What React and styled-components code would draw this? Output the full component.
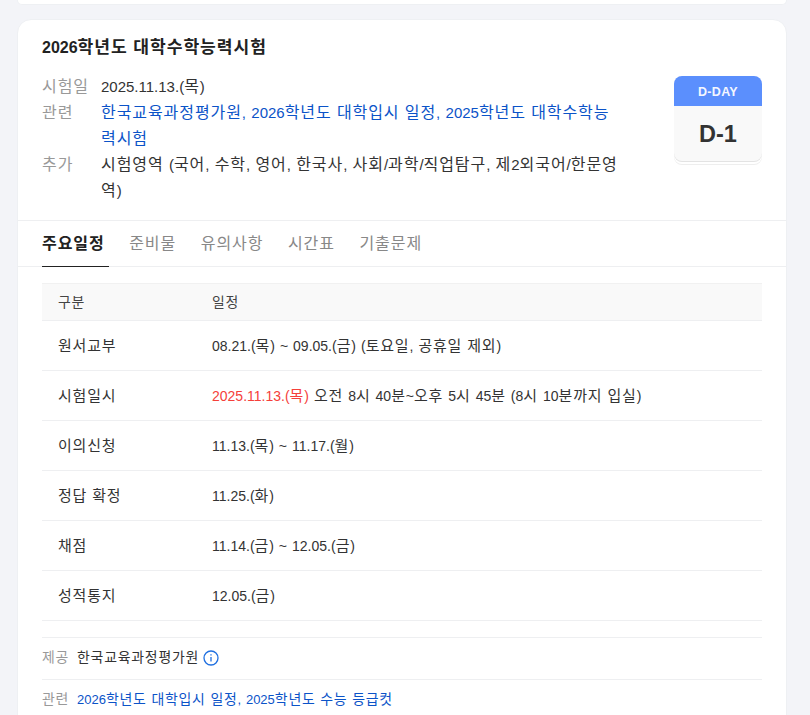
import React from "react";
import styled, { createGlobalStyle } from "styled-components";

const Global = createGlobalStyle`
  html, body { margin: 0; padding: 0; height: 715px; overflow: hidden; background: #f3f4f8; }
  body { font-family: "Liberation Sans", "Noto Sans CJK KR", sans-serif; color: #333; word-spacing: 0.07em; }
  * { box-sizing: border-box; }
`;
const Page = styled.div`
  display: flex; flex-direction: column; gap: 14px; padding: 0 23px 0 17px; height: 715px; overflow: hidden;
`;
const PrevCard = styled.div`
  height: 5px; flex: none; background: #fff; border: 1px solid #eef0f3; border-top: 0; border-radius: 0 0 14px 14px;
`;
const Card = styled.section`
  flex: none; background: #fff; border: 1px solid #eef0f3; border-radius: 14px; height: 720px;
`;
const Hangul = styled.span`
  font-size: 1.07em; letter-spacing: 0.056em; line-height: 0;
`;
const Head = styled.div`
  padding: 16px 24px 16px; border-bottom: 1px solid #eeeff1;
`;
const Title = styled.h2`
  margin: 0 0 14px; font-size: 16px; line-height: 24px; font-weight: 700; color: #222;
`;
const Summary = styled.div`
  display: flex; justify-content: space-between; align-items: flex-start;
`;
const Info = styled.dl`
  margin: 0; width: 578px; display: grid; grid-template-columns: 59px 1fr; font-size: 15px; line-height: 26px;
`;
const Term = styled.dt`
  color: #999;
`;
const Desc = styled.dd`
  margin: 0; color: ${p => (p.$link ? "#0b53c8" : "#333")};
`;
const DDay = styled.div`
  width: 88px; margin-top: 2px; border-radius: 8px; background: #f9f9f9;
  box-shadow: 0 1px 0 #e3e3e3, 0 3px 0 #fff, 0 4px 0 #eee; height: 85px; overflow: hidden;
`;
const DDayTop = styled.div`
  height: 30px; padding-top: 3px; background: #5b8ffd; color: #f4f7ff; font: 700 12.5px/27px "Liberation Sans", sans-serif; letter-spacing: 0.3px; text-align: center;
`;
const DDayValue = styled.div`
  font: 700 23.5px/56px "Liberation Sans", sans-serif; text-align: center; color: #333;
`;
const Tabs = styled.nav`
  display: flex; gap: 20px; padding: 0 24px; height: 46px; border-bottom: 1px solid #eeeff1;
`;
const Tab = styled.div`
  font-size: 15px; line-height: 45px; height: 46px; padding-right: 4.6px; color: ${p => (p.$active ? "#222" : "#888")};
  font-weight: ${p => (p.$active ? 700 : 400)};
  border-bottom: ${p => (p.$active ? "1px solid #222" : "0")};
`;
const Body = styled.div`
  padding: 16px 24px 0;
`;
const Table = styled.table`
  width: 100%; border-collapse: collapse; font-size: 14px;
`;
const Th = styled.th`
  height: 37px; background: #f9f9f9; font-weight: 400; font-size: 13px; text-align: left; color: #444;
  padding: 0 0 0 ${p => p.$first ? 16 : 0}px; border-top: 1px solid #f1f1f1; border-bottom: 1px solid #eeeff1;
  ${p => p.$first && "width: 170px;"}
`;
const Td = styled.td`
  height: 50px; padding: 0 0 0 ${p => p.$first ? 16 : 0}px; border-bottom: 1px solid #eeeff1; color: #333;
`;
const Red = styled.span`
  color: #f5403a;
`;
const Foot = styled.div`
  margin-top: 16px; font-size: 13px;
`;
const FootRow = styled.div`
  height: 42px; padding-bottom: 2px; display: flex; align-items: center; gap: 8px; border-top: 1px solid #eeeff1;
`;
const FootLabel = styled.span`
  color: #999; width: 27px; white-space: nowrap;
`;
const FootText = styled.span`
  color: ${p => (p.$link ? "#0b53c8" : "#333")}; display: inline-flex; align-items: center; gap: 4px;
`;

const K = ({ children }) =>
  children.split(/([가-힣]+)/).map((s, i) => (i % 2 ? <Hangul key={i}>{s}</Hangul> : s));

const rows = [
  ["원서교부", <K>08.21.(목) ~ 09.05.(금) (토요일, 공휴일 제외)</K>],
  ["시험일시", <><Red><K>2025.11.13.(목)</K></Red> <K>오전 8시 40분~오후 5시 45분 (8시 10분까지 입실)</K></>],
  ["이의신청", <K>11.13.(목) ~ 11.17.(월)</K>],
  ["정답 확정", <K>11.25.(화)</K>],
  ["채점", <K>11.14.(금) ~ 12.05.(금)</K>],
  ["성적통지", <K>12.05.(금)</K>],
];
const tabs = ["주요일정", "준비물", "유의사항", "시간표", "기출문제"];

export default function App() {
  return (
    <Page>
      <Global />
      <PrevCard />
      <Card>
        <Head>
          <Title><K>2026학년도 대학수학능력시험</K></Title>
          <Summary>
            <Info>
              <Term><K>시험일</K></Term><Desc><K>2025.11.13.(목)</K></Desc>
              <Term><K>관련</K></Term><Desc $link><K>한국교육과정평가원, 2026학년도 대학입시 일정, 2025학년도 대학수학능력시험</K></Desc>
              <Term><K>추가</K></Term><Desc><K>시험영역 (국어, 수학, 영어, 한국사, 사회/과학/직업탐구, 제2외국어/한문영역)</K></Desc>
            </Info>
            <DDay><DDayTop>D-DAY</DDayTop><DDayValue>D-1</DDayValue></DDay>
          </Summary>
        </Head>
        <Tabs>{tabs.map((t, i) => <Tab key={t} $active={i === 0}><K>{t}</K></Tab>)}</Tabs>
        <Body>
          <Table>
            <thead><tr><Th $first><K>구분</K></Th><Th><K>일정</K></Th></tr></thead>
            <tbody>{rows.map((r, i) => <tr key={i}><Td $first><K>{r[0]}</K></Td><Td>{r[1]}</Td></tr>)}</tbody>
          </Table>
          <Foot>
            <FootRow>
              <FootLabel><K>제공</K></FootLabel>
              <FootText><span><K>한국교육과정평가원</K></span>
                <svg width="16" height="16" viewBox="0 0 16 16" fill="none" stroke="#1f6fe0" strokeWidth="1.3"><circle cx="8" cy="8" r="7"/><path d="M8 7v4.5M8 4.2v1.3"/></svg>
              </FootText>
            </FootRow>
            <FootRow>
              <FootLabel><K>관련</K></FootLabel>
              <FootText $link><span><K>2026학년도 대학입시 일정, 2025학년도 수능 등급컷</K></span></FootText>
            </FootRow>
          </Foot>
        </Body>
      </Card>
    </Page>
  );
}
